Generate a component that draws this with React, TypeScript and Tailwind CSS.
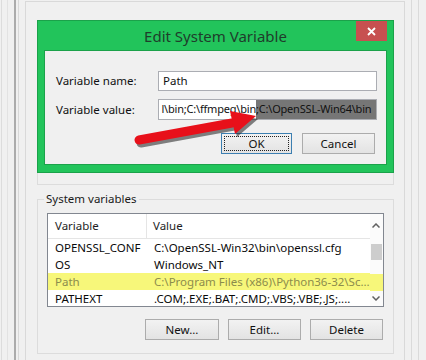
import React from "react";

const F = { fontFamily: '"Noto Sans", "Open Sans", sans-serif' };

function Btn({ children, w, focus }: { children: React.ReactNode; w: string; focus?: boolean }) {
  return (
    <div
      className={`${w} h-[21px] flex items-center justify-center text-[11.5px] text-[#111] bg-gradient-to-b from-[#f2f2f2] to-[#e3e3e3] border ${focus ? "border-[#3c7fb1]" : "border-[#acacac]"}`}
    >
      {focus ? (
        <div className="w-[calc(100%-4px)] h-[calc(100%-4px)] border border-dotted border-[#222] flex items-center justify-center">
          {children}
        </div>
      ) : (
        children
      )}
    </div>
  );
}

const rows = [
  { n: "OPENSSL_CONF", v: "C:\\OpenSSL-Win32\\bin\\openssl.cfg" },
  { n: "OS", v: "Windows_NT" },
  { n: "Path", v: "C:\\Program Files (x86)\\Python36-32\\Sc...", hl: true },
  { n: "PATHEXT", v: ".COM;.EXE;.BAT;.CMD;.VBS;.VBE;.JS;...." },
];

export default function App() {
  return (
    <div className="relative w-[426px] h-[360px] bg-[#f0f0f0] overflow-hidden flex" style={F}>
      {/* left strips */}
      <div className="w-[25px] h-full flex">
        <div className="w-[1px]" />
        <div className="w-[1px] bg-[#dcdcdc]" />
        <div className="w-[5px]" />
        <div className="w-[1px] bg-[#e2e2e2]" />
        <div className="w-[6px]" />
        <div className="w-[2px] bg-[#ababab]" />
        <div className="w-[2px]" />
        <div className="w-[1px] bg-[#d8d8d8]" />
        <div className="flex-1" />
      </div>

      {/* main panel */}
      <div className="w-[380px] h-full mt-[1px] border-l border-t border-r border-[#d9d9d9] pl-[11px] pr-[10px] flex flex-col">
        {/* user variables group (mostly hidden) */}
        <div className="mt-[28px] h-[155px] border border-[#dcdcdc]" />
        {/* system variables group */}
        <div className="relative mt-[14px] h-[155px] border border-[#dcdcdc] px-[9px] pt-[13px] flex flex-col">
          <div className="absolute -top-[9px] left-[6px] px-[2px] bg-[#f0f0f0] text-[11.5px] text-[#1a1a1a] leading-[16px]">
            System variables
          </div>
          {/* list */}
          <div className="h-[94px] border border-[#828790] bg-white flex overflow-hidden">
            <div className="flex-1 flex flex-col">
              <div className="h-[25px] flex border-b border-[#e5e5e5] text-[11.5px] text-[#1e1e1e] shrink-0">
                <div className="w-[99px] pl-[7px] flex items-center border-r border-[#e5e5e5]">Variable</div>
                <div className="flex-1 pl-[6px] flex items-center">Value</div>
              </div>
              {rows.map((r) => (
                <div
                  key={r.n}
                  className={`h-[17px] shrink-0 flex items-center text-[11.5px] ${r.hl ? "bg-[#f7f77a] text-[#8c8c4c]" : "text-[#0a0a0a]"}`}
                >
                  <div className="w-[99px] pl-[7px] whitespace-nowrap">{r.n}</div>
                  <div className="flex-1 pl-[7px] whitespace-nowrap overflow-hidden">{r.v}</div>
                </div>
              ))}
            </div>
            <div className="w-[17px] flex flex-col bg-[#fbfbfb]">
              <div className="h-[24px] flex items-center justify-center">
                <svg width="8" height="5" viewBox="0 0 8 5"><path d="M0.5 4.5 L4 1 L7.5 4.5" fill="none" stroke="#606060" strokeWidth="1.5" /></svg>
              </div>
              <div className="h-[6px]" />
              <div className="h-[16px] mx-[1px] bg-[#cdcdcd]" />
              <div className="h-[15px]" />
              <div className="h-[17px] bg-[#f7f77a]" />
              <div className="h-[15px] flex items-center justify-center">
                <svg width="8" height="5" viewBox="0 0 8 5"><path d="M0.5 0.5 L4 4 L7.5 0.5" fill="none" stroke="#606060" strokeWidth="1.5" /></svg>
              </div>
            </div>
          </div>
          {/* buttons */}
          <div className="mt-[12px] flex justify-end gap-[9px] pr-[1px]">
            <Btn w="w-[74px]">New...</Btn>
            <Btn w="w-[73px]">Edit...</Btn>
            <Btn w="w-[73px]">Delete</Btn>
          </div>
        </div>
      </div>

      {/* right strips */}
      <div className="flex-1 h-full flex">
        <div className="w-[6px]" />
        <div className="w-[1px] bg-[#dadada]" />
        <div className="w-[6px]" />
        <div className="w-[1px] bg-[#dadada]" />
        <div className="flex-1" />
      </div>

      {/* dialog */}
      <div className="absolute left-[37px] top-[20px] w-[357px] h-[153px] bg-[#22c45b] border border-[#1ba24a] flex flex-col">
        <div className="h-[29px] relative flex items-center justify-center">
          <span className="text-[15px] text-[#1f3d2b] leading-none mt-[1px]">Edit System Variable</span>
          <div className="absolute right-[6px] top-0 w-[31px] h-[20px] bg-[#c75050] flex items-center justify-center">
            <svg width="9" height="9" viewBox="0 0 9 9"><path d="M1 1 L8 8 M8 1 L1 8" stroke="#fff" strokeWidth="1.8" /></svg>
          </div>
        </div>
        <div className="mx-[6px] mb-[7px] flex-1 bg-[#f0f0f0] border border-[#1ba24a] pl-[11px] pr-[9px] pt-[20px] flex flex-col text-[11.5px] text-[#111]">
          <div className="flex items-center h-[20px]">
            <div className="w-[102px]">Variable name:</div>
            <div className="flex-1 h-[20px] bg-white border border-[#abadb3] px-[4px] flex items-center">Path</div>
          </div>
          <div className="flex items-center h-[21px] mt-[8px]">
            <div className="w-[102px]">Variable value:</div>
            <div className="flex-1 h-[21px] bg-white border border-[#abadb3] flex items-center overflow-hidden whitespace-nowrap text-[11px] tracking-[-0.2px]">
              <span className="w-[97px] shrink-0 flex justify-end overflow-hidden">l\bin;C:\ffmpeg\bin</span>
              <span className="bg-[#767676] self-stretch flex items-center flex-1 text-[#111]">;C:\OpenSSL-Win64\bin</span>
            </div>
          </div>
          <div className="mt-[13px] flex justify-end gap-[10px] pr-[2px]">
            <Btn w="w-[71px]" focus>OK</Btn>
            <Btn w="w-[73px]">Cancel</Btn>
          </div>
        </div>
      </div>

      {/* red arrow */}
      <svg className="absolute left-[128px] top-[100px]" width="140" height="50" viewBox="0 0 140 50">
        <g transform="translate(2,3)" opacity="0.55">
          <line x1="11" y1="40" x2="104" y2="23" stroke="#202020" strokeWidth="9" strokeLinecap="round" />
          <polygon points="102,11 128,16 107,34" fill="#202020" />
        </g>
        <line x1="11" y1="40" x2="104" y2="23" stroke="#e8101a" strokeWidth="9" strokeLinecap="round" />
        <polygon points="102,11 128,16 107,34" fill="#e8101a" />
      </svg>
    </div>
  );
}
